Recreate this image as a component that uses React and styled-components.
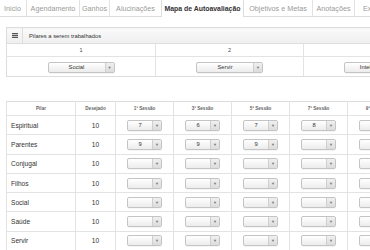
import React from 'react';
import styled, { createGlobalStyle } from 'styled-components';

const GlobalStyle = createGlobalStyle`
  html, body {
    margin: 0;
    padding: 0;
    background: #fff;
    overflow: hidden;
  }
  body {
    font-family: 'Liberation Sans', Arial, sans-serif;
    color: #333;
  }
`;

const Page = styled.div`
  width: 370px;
  height: 250px;
  overflow: hidden;
`;

const Tabs = styled.nav`
  display: flex;
  height: 16px;
  margin-left: -1px;
  border-bottom: 1px solid #ddd;
  white-space: nowrap;
`;

const Tab = styled.div`
  flex: 0 0 auto;
  width: ${(p) => p.$w}px;
  box-sizing: border-box;
  display: flex;
  align-items: center;
  justify-content: center;
  overflow: hidden;
  font-size: ${(p) => (p.$active ? '6.9px' : '7.2px')};
  font-weight: ${(p) => (p.$active ? 700 : 400)};
  color: ${(p) => (p.$active ? '#333' : '#9a9a9a')};
  background: #fff;
  border-right: 1px solid #e2e2e2;
  ${(p) => p.$active && `
    border-left: 1px solid #ddd;
    border-right: 1px solid #ddd;
    margin-left: -1px;
    margin-bottom: -1px;
    height: 17px;
  `}
`;

const Content = styled.div`
  padding: 10px 0 0 6px;
`;

const Panel = styled.table`
  border-collapse: collapse;
  table-layout: fixed;
  width: 446px;
  border: 1px solid #ddd;
`;

const PanelHead = styled.td`
  height: 15px;
  padding: 0;
  background: linear-gradient(#fafafa, #efefef);
  border-bottom: 1px solid #ddd;
`;

const PanelHeadInner = styled.div`
  display: flex;
  align-items: center;
  height: 15px;
`;

const IconCell = styled.div`
  width: 15px;
  height: 15px;
  display: flex;
  align-items: center;
  justify-content: center;
  border-right: 1px solid #ddd;
`;

const PanelTitle = styled.span`
  padding-left: 6px;
  font-size: 5.8px;
  color: #333;
`;

const NumCell = styled.td`
  height: 12px;
  padding: 0;
  text-align: center;
  font-size: 5.5px;
  color: #444;
  border-bottom: 1px solid #e3e3e3;
  border-right: 1px solid #e3e3e3;
`;

const PickCell = styled.td`
  height: 19px;
  padding: 0;
  text-align: center;
  border-right: 1px solid #e3e3e3;
`;

const SelectBox = styled.div`
  display: inline-flex;
  vertical-align: middle;
  width: ${(p) => p.$w}px;
  height: 11px;
  box-sizing: border-box;
  border: 1px solid #c4c4c4;
  border-radius: 2px;
  background: linear-gradient(#ffffff, #ececec);
  box-shadow: 0 1px 0 rgba(0, 0, 0, 0.04);
  overflow: hidden;
`;

const SelectValue = styled.span`
  flex: 1;
  display: flex;
  align-items: center;
  justify-content: center;
  font-size: 5.8px;
  color: #333;
`;

const SelectArrow = styled.span`
  width: 8px;
  display: flex;
  align-items: center;
  justify-content: center;
  border-left: 1px solid #cfcfcf;
  background: linear-gradient(#f0f0f0, #dcdcdc);
  color: #777;
  font-size: 4px;
`;

const Grid = styled.table`
  margin-top: 24px;
  border-collapse: collapse;
  table-layout: fixed;
  width: 399px;
  border: 1px solid #ddd;
`;

const Th = styled.th`
  height: 13px;
  padding: 0;
  font-size: 4.6px;
  font-weight: 700;
  color: #666;
  text-align: center;
  border: 1px solid #e3e3e3;
  border-top: none;
`;

const Td = styled.td`
  height: 18.3px;
  padding: 0;
  font-size: 6.6px;
  color: #333;
  text-align: ${(p) => (p.$left ? 'left' : 'center')};
  padding-left: ${(p) => (p.$left ? '4px' : '0')};
  border: 1px solid #e3e3e3;
`;

const ListIcon = () => (
  <svg width="6" height="5" viewBox="0 0 6 5">
    <rect x="0" y="0" width="6" height="1.2" fill="#555" />
    <rect x="0" y="1.9" width="6" height="1.2" fill="#555" />
    <rect x="0" y="3.8" width="6" height="1.2" fill="#555" />
  </svg>
);

const Select = ({ value, width }) => (
  <SelectBox $w={width}>
    <SelectValue>{value}</SelectValue>
    <SelectArrow>▼</SelectArrow>
  </SelectBox>
);

const tabs = [
  { label: 'Inicio', w: 28 },
  { label: 'Agendamento', w: 53 },
  { label: 'Ganhos', w: 30 },
  { label: 'Alucinações', w: 52 },
  { label: 'Mapa de Autoavaliação', w: 83, active: true },
  { label: 'Objetivos e Metas', w: 69 },
  { label: 'Anotações', w: 42 },
  { label: 'Exercícios', w: 50 },
];

const pilares = ['Social', 'Servir', 'Intelectual'];

const sessions = ['1ª Sessão', '3ª Sessão', '5ª Sessão', '7ª Sessão', '9ª Sessão'];

const rows = [
  { name: 'Espiritual', values: ['7', '6', '7', '8', ''] },
  { name: 'Parentes', values: ['9', '9', '9', '', ''] },
  { name: 'Conjugal', values: ['', '', '', '', ''] },
  { name: 'Filhos', values: ['', '', '', '', ''] },
  { name: 'Social', values: ['', '', '', '', ''] },
  { name: 'Saúde', values: ['', '', '', '', ''] },
  { name: 'Servir', values: ['', '', '', '', ''] },
];

const App = () => {
  return (
    <Page>
      <GlobalStyle />
      <Tabs>
        {tabs.map((t) => (
          <Tab key={t.label} $w={t.w} $active={t.active}>{t.label}</Tab>
        ))}
      </Tabs>

      <Content>
        <Panel>
          <colgroup>
            <col style={{ width: 149 }} />
            <col style={{ width: 148 }} />
            <col style={{ width: 148 }} />
          </colgroup>
          <tbody>
            <tr>
              <PanelHead colSpan={3}>
                <PanelHeadInner>
                  <IconCell><ListIcon /></IconCell>
                  <PanelTitle>Pilares a serem trabalhados</PanelTitle>
                </PanelHeadInner>
              </PanelHead>
            </tr>
            <tr>
              {pilares.map((p, i) => (
                <NumCell key={p}>{i + 1}</NumCell>
              ))}
            </tr>
            <tr>
              {pilares.map((p) => (
                <PickCell key={p}><Select value={p} width={67} /></PickCell>
              ))}
            </tr>
          </tbody>
        </Panel>

        <Grid>
          <colgroup>
            <col style={{ width: 69 }} />
            <col style={{ width: 40 }} />
            {sessions.map((s) => (
              <col key={s} style={{ width: 58 }} />
            ))}
          </colgroup>
          <thead>
            <tr>
              <Th>Pilar</Th>
              <Th>Desejado</Th>
              {sessions.map((s) => (
                <Th key={s}>{s}</Th>
              ))}
            </tr>
          </thead>
          <tbody>
            {rows.map((r) => (
              <tr key={r.name}>
                <Td $left>{r.name}</Td>
                <Td>10</Td>
                {r.values.map((v, i) => (
                  <Td key={i}><Select value={v} width={35} /></Td>
                ))}
              </tr>
            ))}
          </tbody>
        </Grid>
      </Content>
    </Page>
  );
};

export default App;
